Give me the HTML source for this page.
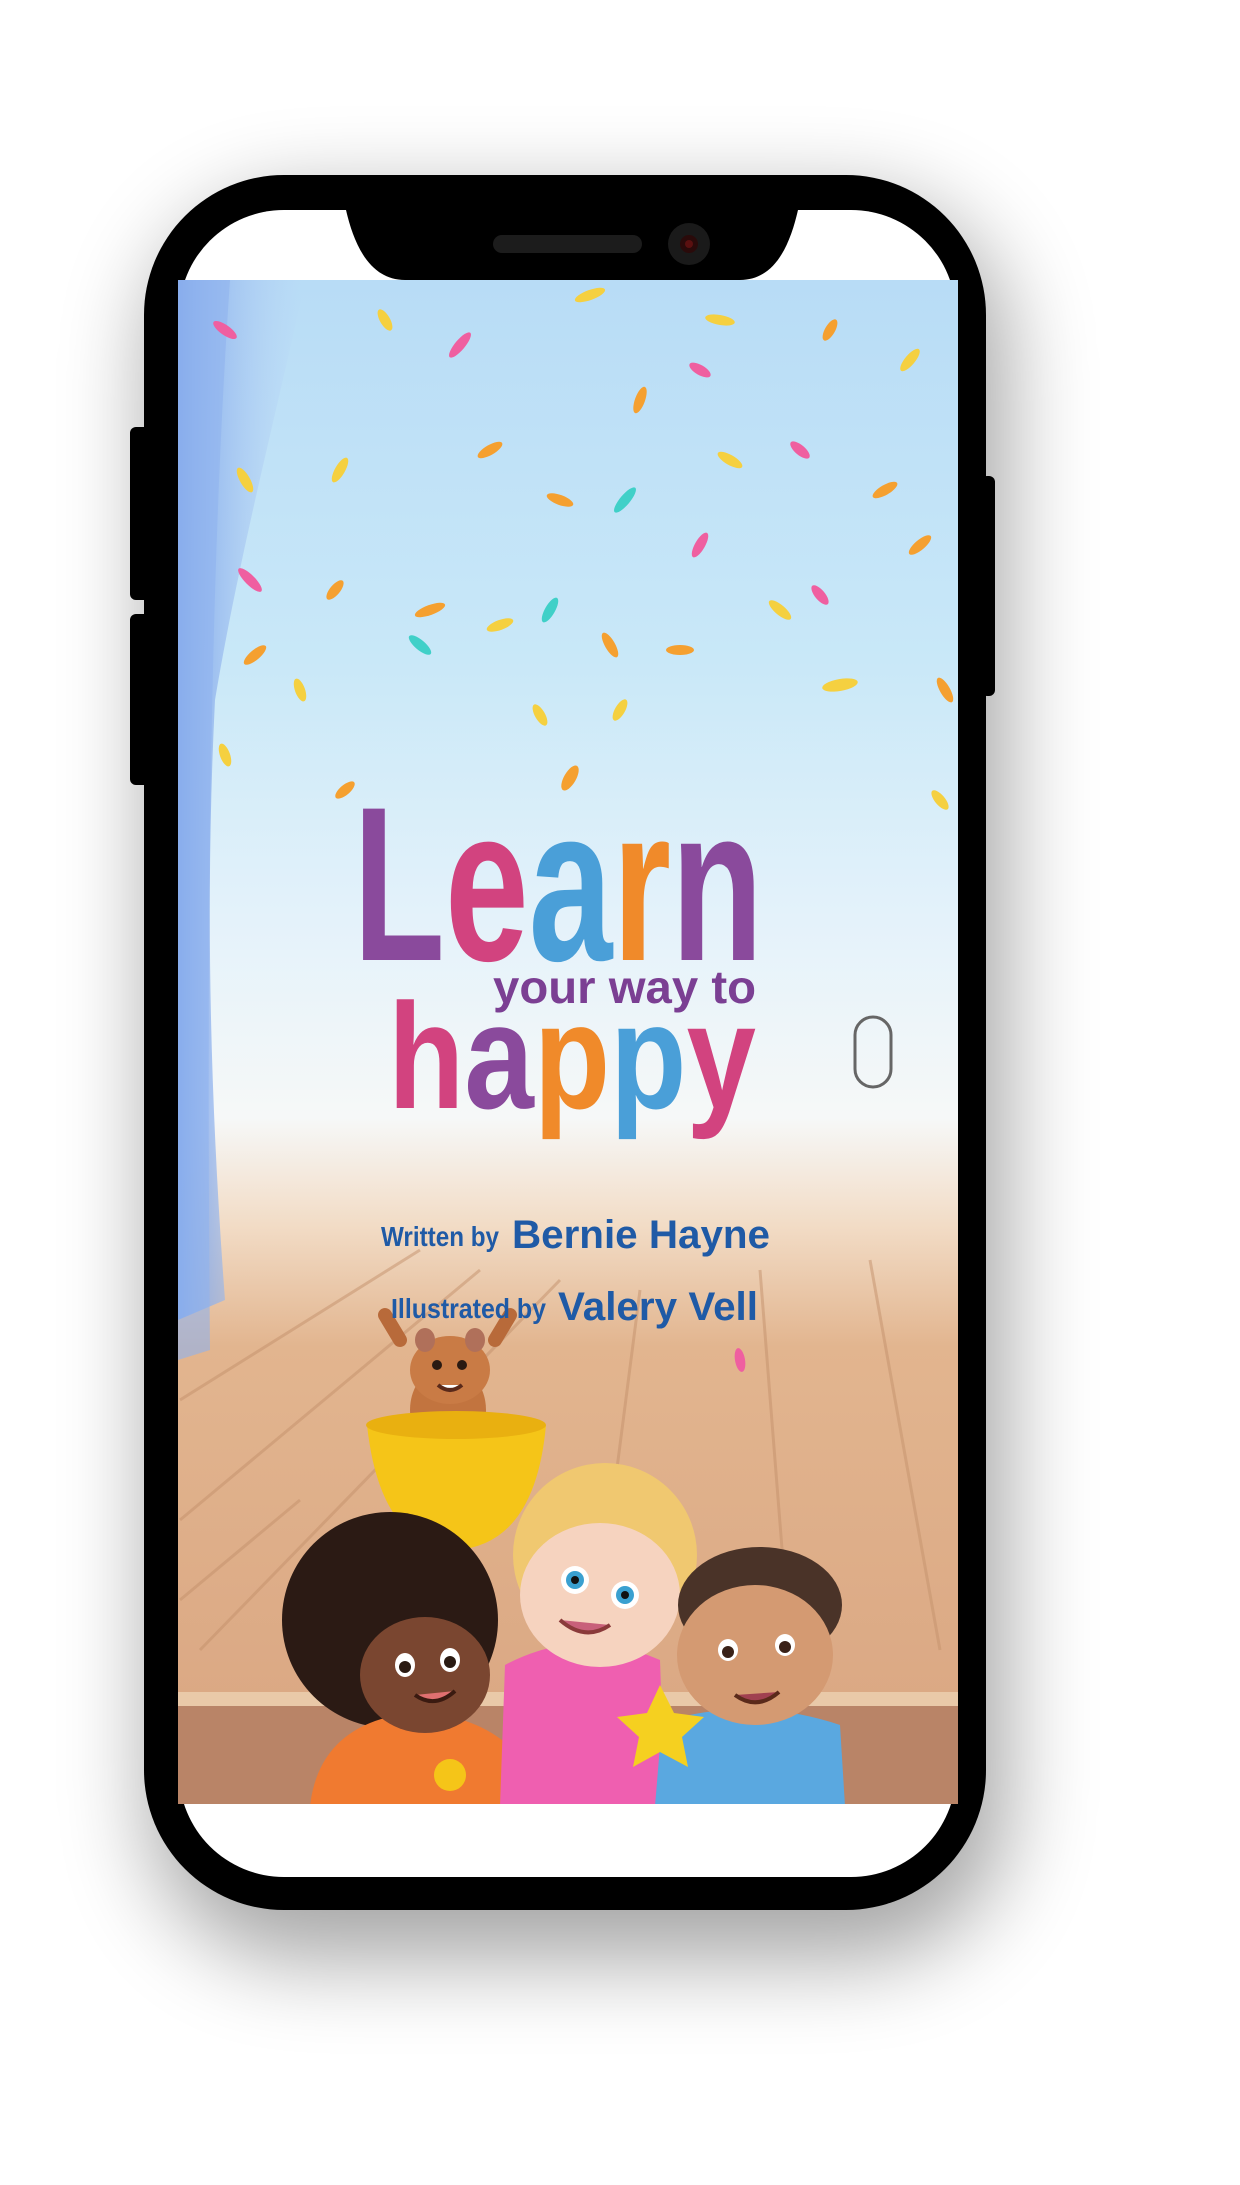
<!DOCTYPE html>
<html><head><meta charset="utf-8"><style>
html,body{margin:0;padding:0;background:#fff;width:1240px;height:2185px;overflow:hidden}
svg{position:absolute;left:0;top:0}
</style></head><body>
<svg width="1240" height="2185" viewBox="0 0 1240 2185" xmlns="http://www.w3.org/2000/svg">
<defs>
<filter id="sh" x="-30%" y="-30%" width="160%" height="160%"><feGaussianBlur stdDeviation="45"/></filter>
<clipPath id="img"><rect x="178" y="280" width="780" height="1524"/></clipPath>
<linearGradient id="sky" x1="0" y1="0" x2="0" y2="1">
<stop offset="0" stop-color="#b8dcf6"/><stop offset="0.25" stop-color="#c9e8f8"/>
<stop offset="0.42" stop-color="#e4f2fa"/><stop offset="0.55" stop-color="#f6f8f8"/>
<stop offset="0.62" stop-color="#f2dcc6"/><stop offset="0.7" stop-color="#e2b58f"/>
<stop offset="1" stop-color="#d9a581"/></linearGradient>
<linearGradient id="cur" x1="0" y1="0" x2="1" y2="0"><stop offset="0" stop-color="#7fa6ea"/><stop offset="1" stop-color="#b7cff4" stop-opacity="0"/></linearGradient>
</defs>
<rect x="150" y="200" width="856" height="1760" rx="150" fill="#000" opacity="0.35" filter="url(#sh)"/>
<rect x="130" y="427" width="20" height="173" rx="6" fill="#000"/>
<rect x="130" y="614" width="20" height="171" rx="6" fill="#000"/>
<rect x="981" y="476" width="14" height="220" rx="6" fill="#000"/>
<rect x="144" y="175" width="842" height="1735" rx="140" fill="#000"/>
<rect x="179" y="210" width="777" height="1667" rx="105" fill="#fff"/>
<g clip-path="url(#img)">
<rect x="178" y="280" width="780" height="1524" fill="url(#sky)"/>
<path d="M178 280 L305 280 C280 400 240 550 215 700 C205 900 210 1100 225 1300 L178 1320Z" fill="url(#cur)"/>
<path d="M178 280 L230 280 C215 500 205 800 210 1350 L178 1360Z" fill="#8fb2ee" opacity="0.6"/>
<g stroke="#c4916c" stroke-width="3" opacity="0.5" fill="none">
<path d="M180 1400 L420 1250"/><path d="M180 1520 L480 1270"/><path d="M200 1650 L560 1280"/><path d="M640 1290 L600 1600"/><path d="M760 1270 L790 1650"/><path d="M870 1260 L940 1650"/><path d="M180 1600 L300 1500"/>
</g>
<rect x="178" y="1692" width="780" height="14" fill="#e9c9a8"/>
<rect x="178" y="1706" width="780" height="100" fill="#b98467"/>
<g>
<ellipse cx="225" cy="330" rx="14" ry="5" fill="#ef5fa0" transform="rotate(35 225 330)"/>
<ellipse cx="385" cy="320" rx="12" ry="5" fill="#f5d040" transform="rotate(60 385 320)"/>
<ellipse cx="460" cy="345" rx="16" ry="5" fill="#ef5fa0" transform="rotate(-50 460 345)"/>
<ellipse cx="590" cy="295" rx="16" ry="5" fill="#f5d040" transform="rotate(-20 590 295)"/>
<ellipse cx="720" cy="320" rx="15" ry="5" fill="#f5d040" transform="rotate(10 720 320)"/>
<ellipse cx="830" cy="330" rx="12" ry="5" fill="#f5a030" transform="rotate(-60 830 330)"/>
<ellipse cx="640" cy="400" rx="14" ry="5" fill="#f5a030" transform="rotate(-70 640 400)"/>
<ellipse cx="700" cy="370" rx="12" ry="5" fill="#ef5fa0" transform="rotate(30 700 370)"/>
<ellipse cx="910" cy="360" rx="14" ry="5" fill="#f5d040" transform="rotate(-50 910 360)"/>
<ellipse cx="245" cy="480" rx="14" ry="5" fill="#f5d040" transform="rotate(60 245 480)"/>
<ellipse cx="340" cy="470" rx="14" ry="5" fill="#f5d040" transform="rotate(-60 340 470)"/>
<ellipse cx="490" cy="450" rx="14" ry="5" fill="#f5a030" transform="rotate(-30 490 450)"/>
<ellipse cx="560" cy="500" rx="14" ry="5" fill="#f5a030" transform="rotate(20 560 500)"/>
<ellipse cx="625" cy="500" rx="16" ry="5" fill="#40d0c8" transform="rotate(-50 625 500)"/>
<ellipse cx="730" cy="460" rx="14" ry="5" fill="#f5d040" transform="rotate(30 730 460)"/>
<ellipse cx="800" cy="450" rx="12" ry="5" fill="#ef5fa0" transform="rotate(40 800 450)"/>
<ellipse cx="885" cy="490" rx="14" ry="5" fill="#f5a030" transform="rotate(-30 885 490)"/>
<ellipse cx="250" cy="580" rx="16" ry="5" fill="#ef5fa0" transform="rotate(45 250 580)"/>
<ellipse cx="335" cy="590" rx="12" ry="5" fill="#f5a030" transform="rotate(-50 335 590)"/>
<ellipse cx="430" cy="610" rx="16" ry="5" fill="#f5a030" transform="rotate(-20 430 610)"/>
<ellipse cx="500" cy="625" rx="14" ry="5" fill="#f5d040" transform="rotate(-20 500 625)"/>
<ellipse cx="550" cy="610" rx="14" ry="5" fill="#40d0c8" transform="rotate(-60 550 610)"/>
<ellipse cx="700" cy="545" rx="14" ry="5" fill="#ef5fa0" transform="rotate(-60 700 545)"/>
<ellipse cx="780" cy="610" rx="14" ry="5" fill="#f5d040" transform="rotate(40 780 610)"/>
<ellipse cx="820" cy="595" rx="12" ry="5" fill="#ef5fa0" transform="rotate(50 820 595)"/>
<ellipse cx="920" cy="545" rx="14" ry="5" fill="#f5a030" transform="rotate(-40 920 545)"/>
<ellipse cx="255" cy="655" rx="14" ry="5" fill="#f5a030" transform="rotate(-40 255 655)"/>
<ellipse cx="300" cy="690" rx="12" ry="5" fill="#f5d040" transform="rotate(70 300 690)"/>
<ellipse cx="420" cy="645" rx="14" ry="5" fill="#40d0c8" transform="rotate(40 420 645)"/>
<ellipse cx="610" cy="645" rx="14" ry="5" fill="#f5a030" transform="rotate(60 610 645)"/>
<ellipse cx="680" cy="650" rx="14" ry="5" fill="#f5a030" transform="rotate(0 680 650)"/>
<ellipse cx="840" cy="685" rx="18" ry="6" fill="#f5d040" transform="rotate(-10 840 685)"/>
<ellipse cx="945" cy="690" rx="14" ry="5" fill="#f5a030" transform="rotate(60 945 690)"/>
<ellipse cx="540" cy="715" rx="12" ry="5" fill="#f5d040" transform="rotate(60 540 715)"/>
<ellipse cx="620" cy="710" rx="12" ry="5" fill="#f5d040" transform="rotate(-60 620 710)"/>
<ellipse cx="225" cy="755" rx="12" ry="5" fill="#f5d040" transform="rotate(70 225 755)"/>
<ellipse cx="570" cy="778" rx="14" ry="6" fill="#f5a030" transform="rotate(-60 570 778)"/>
<ellipse cx="345" cy="790" rx="12" ry="5" fill="#f5a030" transform="rotate(-40 345 790)"/>
<ellipse cx="940" cy="800" rx="12" ry="5" fill="#f5d040" transform="rotate(50 940 800)"/>
<ellipse cx="740" cy="1360" rx="12" ry="5" fill="#ef5fa0" transform="rotate(80 740 1360)"/>
</g>
<path d="M400 1340 l-15 -25 M495 1340 l15 -25" stroke="#b86a3a" stroke-width="14" stroke-linecap="round"/>
<ellipse cx="448" cy="1410" rx="38" ry="45" fill="#c2743f"/>
<ellipse cx="450" cy="1370" rx="40" ry="34" fill="#c97b45"/>
<ellipse cx="425" cy="1340" rx="10" ry="12" fill="#b0705a"/><ellipse cx="475" cy="1340" rx="10" ry="12" fill="#b0705a"/>
<circle cx="437" cy="1365" r="5" fill="#2a1a12"/><circle cx="462" cy="1365" r="5" fill="#2a1a12"/>
<path d="M438 1385 q12 10 24 0" stroke="#5a2a1a" stroke-width="4" fill="#fff"/>
<path d="M367 1425 Q380 1545 455 1550 Q535 1545 546 1425 Z" fill="#f5c518"/>
<ellipse cx="456" cy="1425" rx="90" ry="14" fill="#e9b010"/>
<path d="M445 1548 L440 1620 L475 1620 L470 1548Z" fill="#e9b010"/>
<circle cx="390" cy="1620" r="108" fill="#2b1a14"/>
<path d="M310 1806 Q320 1720 420 1712 Q520 1720 545 1806Z" fill="#f07a30"/>
<ellipse cx="425" cy="1675" rx="65" ry="58" fill="#7a4630"/>
<ellipse cx="405" cy="1665" rx="10" ry="12" fill="#fff"/><circle cx="405" cy="1667" r="6" fill="#2a1a12"/>
<ellipse cx="450" cy="1660" rx="10" ry="12" fill="#fff"/><circle cx="450" cy="1662" r="6" fill="#2a1a12"/>
<path d="M415 1695 q20 14 40 -4" stroke="#3a1a10" stroke-width="4" fill="#e07070"/>
<circle cx="450" cy="1775" r="16" fill="#f5c518"/>
<path d="M500 1806 L505 1665 Q580 1625 660 1660 L665 1806Z" fill="#ef5fb0"/>
<circle cx="605" cy="1555" r="92" fill="#f0c870"/>
<ellipse cx="600" cy="1595" rx="80" ry="72" fill="#f6d3bf"/>
<circle cx="575" cy="1580" r="14" fill="#fff"/><circle cx="575" cy="1580" r="9" fill="#3aa0d0"/><circle cx="575" cy="1580" r="4" fill="#111"/>
<circle cx="625" cy="1595" r="14" fill="#fff"/><circle cx="625" cy="1595" r="9" fill="#3aa0d0"/><circle cx="625" cy="1595" r="4" fill="#111"/>
<path d="M560 1620 q25 22 50 5" stroke="#8a3a3a" stroke-width="4" fill="#c8607a"/>
<path d="M655 1806 L662 1722 Q750 1695 840 1725 L845 1806Z" fill="#5aa8e0"/>
<ellipse cx="760" cy="1605" rx="82" ry="58" fill="#4a3328"/>
<ellipse cx="755" cy="1655" rx="78" ry="70" fill="#d49a72"/>
<ellipse cx="728" cy="1650" rx="10" ry="11" fill="#fff"/><circle cx="728" cy="1652" r="6" fill="#3a2218"/>
<ellipse cx="785" cy="1645" rx="10" ry="11" fill="#fff"/><circle cx="785" cy="1647" r="6" fill="#3a2218"/>
<path d="M735 1695 q22 16 44 -3" stroke="#5a2a1a" stroke-width="4" fill="#a04050"/>
<path d="M660 1685 l14 28 30 4 -22 20 6 30 -28 -15 -27 15 6 -30 -22 -20 30 -4z" fill="#f5d020"/>
</g>
<g font-family="Liberation Sans, sans-serif" font-weight="bold">
<text x="353" y="960" font-size="220" textLength="410" lengthAdjust="spacingAndGlyphs"><tspan fill="#8a4a9c">L</tspan><tspan fill="#d2437f">e</tspan><tspan fill="#4a9fd8">a</tspan><tspan fill="#f08a2a">r</tspan><tspan fill="#8a4a9c">n</tspan></text>
<text x="493" y="1003" font-size="46" fill="#7b3f93" textLength="263" lengthAdjust="spacingAndGlyphs">your way to</text>
<text x="388" y="1108" font-size="150" textLength="368" lengthAdjust="spacingAndGlyphs"><tspan fill="#d2437f">h</tspan><tspan fill="#8a4a9c">a</tspan><tspan fill="#f08a2a">p</tspan><tspan fill="#4a9fd8">p</tspan><tspan fill="#d2437f">y</tspan></text>
<text x="381" y="1246" font-size="28" fill="#1f5aa6" textLength="118" lengthAdjust="spacingAndGlyphs">Written by</text>
<text x="512" y="1248" font-size="40" fill="#1f5aa6" textLength="258" lengthAdjust="spacingAndGlyphs">Bernie Hayne</text>
<text x="391" y="1318" font-size="28" fill="#1f5aa6" textLength="155" lengthAdjust="spacingAndGlyphs">Illustrated by</text>
<text x="558" y="1320" font-size="40" fill="#1f5aa6" textLength="200" lengthAdjust="spacingAndGlyphs">Valery Vell</text>
</g>
<rect x="855" y="1017" width="36" height="70" rx="18" fill="none" stroke="#666" stroke-width="3"/>
<path d="M346 210 L798 210 C790 245 775 280 740 280 L405 280 C370 280 354 245 346 210Z" fill="#000"/>
<rect x="493" y="235" width="149" height="18" rx="9" fill="#1c1c1c"/>
<circle cx="689" cy="244" r="21" fill="#1a1a1a"/><circle cx="689" cy="244" r="9" fill="#2a0a0a"/><circle cx="689" cy="244" r="4" fill="#5a1010"/>
</svg>
</body></html>
